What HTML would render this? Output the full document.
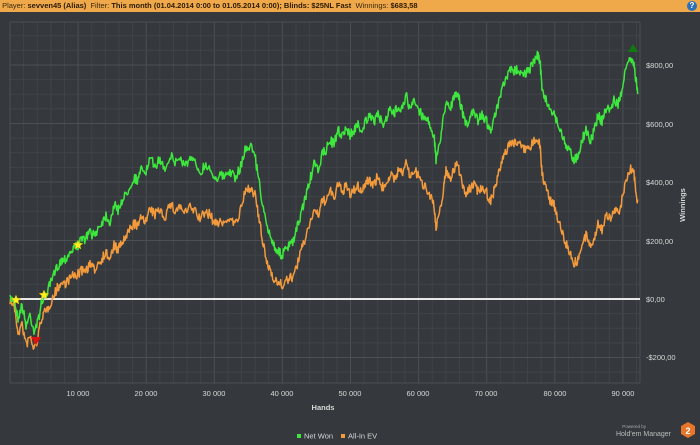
<!DOCTYPE html>
<html><head><meta charset="utf-8">
<style>
html,body{margin:0;padding:0;width:700px;height:445px;overflow:hidden;background:#35383c;font-family:"Liberation Sans",sans-serif;}
.hdr{position:absolute;left:0;top:0;width:700px;height:12px;background:#efa84a;font-size:7.5px;color:#3a2a10;line-height:12px;white-space:nowrap}
.hdr b{font-weight:bold;color:#2a1a05}
.help{position:absolute;right:3px;top:1px;width:10px;height:10px;border-radius:50%;background:#2f6fb5;color:#fff;font-size:8px;font-weight:bold;text-align:center;line-height:10px}
svg{position:absolute;left:0;top:0}
</style></head><body>
<div class="hdr">&nbsp;Player: <b>sevven45 (Alias)</b> &nbsp;Filter: <b>This month (01.04.2014 0:00 to 01.05.2014 0:00); Blinds: $25NL Fast</b> &nbsp;Winnings: <b>$683,58</b></div>
<div class="help">?</div>
<svg id="s" width="700" height="445" xmlns="http://www.w3.org/2000/svg" font-family="Liberation Sans, sans-serif">
<g id="grid"></g>
<line x1="10" y1="299" x2="640" y2="299" stroke="#e8e8e8" stroke-width="2"/>
<path id="og" fill="none" stroke="#f39a3c" stroke-width="1.5" stroke-linejoin="round"/>
<path id="gr" fill="none" stroke="#3de83d" stroke-width="1.5" stroke-linejoin="round"/>
<g fill="#ffef22" stroke="#c8b800" stroke-width="0.5">
<polygon id="st1" points=""/><polygon id="st2" points=""/><polygon id="st3" points=""/>
</g>
<polygon points="31,337 41,337 36,345" fill="#e01010"/>
<polygon points="628,52 638,52 633,44" fill="#107a10"/>
<g fill="#d8d8d8" font-size="7.5">
<text x="646" y="68">$800,00</text>
<text x="646" y="127">$600,00</text>
<text x="646" y="185">$400,00</text>
<text x="646" y="244">$200,00</text>
<text x="646" y="302">$0,00</text>
<text x="646" y="360">-$200,00</text>
<g text-anchor="middle">
<text x="78" y="396">10 000</text><text x="146" y="396">20 000</text><text x="214" y="396">30 000</text>
<text x="282" y="396">40 000</text><text x="350" y="396">50 000</text><text x="418" y="396">60 000</text>
<text x="486" y="396">70 000</text><text x="555" y="396">80 000</text><text x="623" y="396">90 000</text>
<text x="323" y="410" font-weight="bold">Hands</text>
</g>
<text transform="translate(685,205) rotate(-90)" text-anchor="middle" font-weight="bold">Winnings</text>
<rect x="297" y="434" width="4" height="4" fill="#3de83d"/><text x="304" y="438.5">Net Won</text>
<rect x="341" y="434" width="4" height="4" fill="#f39a3c"/><text x="348" y="438.5">All-In EV</text>
<text x="646" y="428" font-size="4.5" fill="#aaa" text-anchor="end">Powered by</text>
<text x="671" y="436" font-size="7" fill="#bbb" text-anchor="end">Hold'em Manager</text>
</g>
<polygon points="681,426 688,422 695,426 695,434 688,438 681,434" fill="#e8762a"/>
<text x="688" y="434" font-size="9" font-weight="bold" fill="#fff" text-anchor="middle" font-family="Liberation Sans, sans-serif">2</text>
</svg>
<script>
var g=document.getElementById('grid'),h='';
for(var i=0;i<=46;i++){var x=10+i*13.62;if(x>641)break;var maj=(i%5==0)&&i>0;h+='<line x1="'+x+'" y1="22" x2="'+x+'" y2="383" stroke="'+(maj?'#4c5055':'#404348')+'" stroke-width="1"/>';}
for(var j=-6;j<=18;j++){var y=299-j*14.625;if(y<22||y>383)continue;var maj=(j%4==0);h+='<line x1="10" y1="'+y+'" x2="640" y2="'+y+'" stroke="'+(maj?'#4c5055':'#404348')+'" stroke-width="1"/>';}
h+='<line x1="10" y1="22" x2="640" y2="22" stroke="#4c5055"/><line x1="10" y1="383" x2="640" y2="383" stroke="#4c5055"/><line x1="10" y1="22" x2="10" y2="383" stroke="#4c5055"/><line x1="640" y1="22" x2="640" y2="383" stroke="#4c5055"/>';
g.innerHTML=h;
var P=[10,300,14,298,18,318,22,305,26,325,30,315,34,330,38,322,42,300,46,295,50,285,54,275,58,265,62,260,66,258,70,252,74,248,78,245,82,240,86,238,90,232,94,236,98,228,102,222,106,215,110,222,114,205,118,210,122,200,126,195,130,185,134,178,138,180,142,168,146,172,150,160,155,165,160,160,165,168,170,155,175,162,180,158,185,165,190,160,195,163,200,172,205,165,210,168,215,178,220,175,225,178,230,170,235,180,240,168,245,150,250,145,255,155,258,175,262,200,266,225,270,235,274,245,278,252,282,255,286,250,290,245,294,240,298,225,302,210,306,195,310,180,314,165,318,170,322,155,326,150,330,140,334,145,338,130,342,135,346,128,350,135,354,130,358,125,362,130,366,120,370,118,374,122,378,112,382,125,386,118,390,110,394,115,398,105,402,108,406,95,410,110,414,102,418,108,422,115,426,118,430,125,434,135,436,160,440,140,444,115,446,100,450,108,454,98,458,95,462,110,466,125,470,118,474,112,478,120,482,115,486,120,490,130,494,120,498,105,502,90,506,80,510,70,514,72,518,68,522,75,526,72,530,70,534,60,538,55,540,60,542,90,546,100,550,110,554,112,558,125,562,135,566,145,570,152,574,160,578,155,582,140,586,130,590,140,594,132,598,115,602,122,606,108,610,110,614,100,618,105,622,90,626,70,630,58,634,62,636,80,638,95];
var G=[10,0,20,18,30,22,40,15,80,30,150,50,240,45,282,30,350,60,436,70,518,72,578,105,640,112];
function gap(x){for(var k=0;k<G.length-2;k+=2){if(x<=G[k+2]){var t=(x-G[k])/(G[k+2]-G[k]);return G[k+1]+t*(G[k+3]-G[k+1]);}}return 112;}
var seed=7;function rnd(){seed=(seed*16807)%2147483647;return seed/2147483647-0.5;}
var dg='',do_='';
for(var k=0;k<P.length-2;k+=2){
 for(var s=0;s<6;s++){var t=s/6;var x=P[k]+t*(P[k+2]-P[k]);var y=P[k+1]+t*(P[k+3]-P[k+1]);
  var yg=y+rnd()*10;var yo=y+gap(x)+rnd()*10;
  dg+=(dg?'L':'M')+x.toFixed(1)+' '+yg.toFixed(1);do_+=(do_?'L':'M')+x.toFixed(1)+' '+yo.toFixed(1);}
}
document.getElementById('gr').setAttribute('d',dg);
document.getElementById('og').setAttribute('d',do_);
function star(id,cx,cy,r){var p=[];for(var i=0;i<10;i++){var a=-Math.PI/2+i*Math.PI/5;var rr=i%2?r*0.45:r;p.push((cx+rr*Math.cos(a)).toFixed(1)+','+(cy+rr*Math.sin(a)).toFixed(1));}document.getElementById(id).setAttribute('points',p.join(' '));}
star('st1',16,300,5);star('st2',44,295,5);star('st3',78,245,5);
</script>
</body></html>
